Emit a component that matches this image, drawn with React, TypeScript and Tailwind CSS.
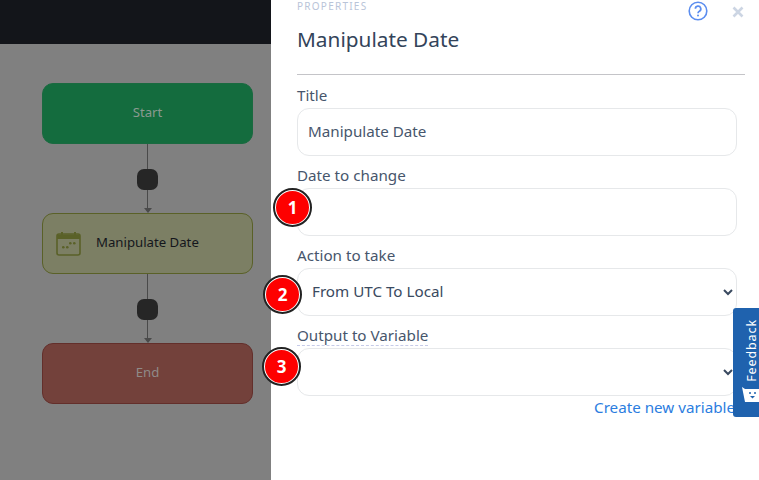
import React from "react";

const font = { fontFamily: '"Noto Sans", "Open Sans", sans-serif' };

function Connector() {
  return (
    <div className="flex flex-col items-center w-[211px] h-[69px]">
      <div className="w-px h-[25px] bg-[#4a4a4a]" />
      <div className="w-[21px] h-[21px] rounded-[7px] bg-[#262626] shrink-0" />
      <div className="w-px h-[18px] bg-[#4a4a4a]" />
      <svg width="8" height="5" viewBox="0 0 8 5" className="block">
        <path d="M0 0H8L4 5Z" fill="#4a4a4a" />
      </svg>
    </div>
  );
}

function Badge({ n, className }: { n: number; className: string }) {
  return (
    <div
      className={`absolute w-[37px] h-[37px] rounded-full bg-[#fe0000] border-2 border-white outline-2 outline-[#222] -outline-offset-1 flex items-center justify-center text-white font-bold text-[17px] ${className}`}
    >
      {n}
    </div>
  );
}

function Label({ children, dashed, first }: { children: React.ReactNode; dashed?: boolean; first?: boolean }) {
  return (
    <div className={`${first ? "h-[33px]" : "h-[32px]"} flex items-end ${dashed ? "pb-[2px]" : "pb-[3px]"} text-[15.2px] leading-[20px] text-[#47566c]`}>
      <span className={dashed ? "border-b border-dashed border-[#c6cbe8] leading-[19px]" : ""}>{children}</span>
    </div>
  );
}

export default function App() {
  return (
    <div className="relative flex w-[759px] h-[480px] overflow-hidden bg-white" style={font}>
      <div className="w-[271px] shrink-0 flex flex-col bg-[#808080]">
        <div className="h-[44px] bg-[#13151a]" />
        <div className="flex flex-col pl-[42px] pt-[39px]">
          <div className="w-[211px] h-[61px] rounded-[11px] bg-[#146c3e] border border-[#1a6a40] flex items-center justify-center pb-[2px] text-[13.2px] text-[#8a9a90]">
            Start
          </div>
          <Connector />
          <div className="w-[211px] h-[61px] rounded-[11px] bg-[#7c7f64] border border-[#5a6128] flex items-center pl-[13px] gap-[15px] text-[13.2px] text-[#14161c]">
            <svg width="25" height="25" viewBox="0 0 25 25" fill="none" className="-mt-[1px]">
              <rect x="1" y="3" width="23" height="21" rx="2" stroke="#5a6128" strokeWidth="1.6" />
              <path d="M1 3.5h23V8H1z" fill="#5a6128" />
              <path d="M6 1v3M19 1v3" stroke="#5a6128" strokeWidth="2" />
              <rect x="6" y="15" width="2.6" height="2.6" rx="1.3" fill="#5a6128" />
              <rect x="10" y="15" width="2.6" height="2.6" rx="1.3" fill="#5a6128" />
              <rect x="13" y="11" width="2.6" height="2.6" rx="1.3" fill="#5a6128" />
              <rect x="17" y="11" width="2.6" height="2.6" rx="1.3" fill="#5a6128" />
            </svg>
            <span className="-mt-[2px]">Manipulate Date</span>
          </div>
          <Connector />
          <div className="w-[211px] h-[61px] rounded-[11px] bg-[#73413b] border border-[#632f2b] flex items-center justify-center pb-[2px] text-[13.2px] text-[#8f8a88]">
            End
          </div>
        </div>
      </div>

      <div className="relative flex-1 pl-[26px] pr-[14px] flex flex-col">
        <div className="h-[12px] text-[10px] leading-[12px] tracking-[1.25px] text-[#b9c4d8]">PROPERTIES</div>
        <div className="h-[46px] flex items-center pt-[10px] text-[20.8px] text-[#33445a]">Manipulate Date</div>
        <div className="h-[17px] border-b border-[#c4c4c8]" />
        <Label first>Title</Label>
        <input
          readOnly
          value="Manipulate Date"
          className="w-[440px] h-[48px] rounded-[12px] border border-[#e6e8ea] px-[10px] pb-[2px] text-[15.2px] text-[#47566c] outline-none"
        />
        <Label>Date to change</Label>
        <input readOnly className="w-[440px] h-[48px] rounded-[12px] border border-[#e6e8ea] px-[10px] text-[15.2px] outline-none" />
        <Label>Action to take</Label>
        <select className="w-[440px] h-[48px] rounded-[12px] border border-[#e6e8ea] px-[10px] pb-[2px] bg-white text-[15.2px] text-[#3a4a60] outline-none">
          <option>From UTC To Local</option>
        </select>
        <Label dashed>Output to Variable</Label>
        <select className="w-[440px] h-[48px] rounded-[12px] border border-[#e6e8ea] px-[10px] bg-white text-[15.2px] text-[#3a4a60] outline-none">
          <option></option>
        </select>
        <div className="w-[438px] mt-[1px] text-right text-[15.2px] leading-[20px] text-[#2b7de0] whitespace-nowrap">Create new variable</div>

        <svg className="absolute left-[417px] top-[1px]" width="20" height="20" viewBox="0 0 20 20" fill="none">
          <circle cx="10" cy="10" r="8.8" stroke="#5b8def" strokeWidth="1.6" />
          <path d="M7.4 7.8a2.7 2.7 0 1 1 4 2.4c-.9.5-1.4 1-1.4 2" stroke="#5b8def" strokeWidth="1.7" />
          <circle cx="10" cy="14.6" r="1" fill="#5b8def" />
        </svg>
        <svg className="absolute left-[461px] top-[6px]" width="12" height="12" viewBox="0 0 12 12" fill="none">
          <path d="M1.5 1.5l9 9M10.5 1.5l-9 9" stroke="#ccd5e3" strokeWidth="2.6" />
        </svg>
      </div>

      <Badge n={1} className="left-[274px] top-[189px]" />
      <Badge n={2} className="left-[264px] top-[276px]" />
      <Badge n={3} className="left-[263px] top-[348px]" />

      <div className="absolute left-[733px] top-[308px] w-[26px] h-[109px] bg-[#1f62ae] rounded-l-[3px] overflow-hidden">
        <div className="absolute left-[12px] top-[11px] [writing-mode:vertical-rl] rotate-180 text-[12.5px] leading-[14px] tracking-[0.9px] text-white">
          Feedback
        </div>
        <svg className="absolute left-[9px] top-[79px]" width="17" height="15" viewBox="0 0 17 15">
          <path d="M0 0l3 2h14v13H3z" fill="#fff" />
          <circle cx="8" cy="6" r="1" fill="#1f62ae" />
          <circle cx="13" cy="6" r="1" fill="#1f62ae" />
          <path d="M8 9h5l-2.5 2.5z" fill="#1f62ae" />
        </svg>
      </div>
    </div>
  );
}
